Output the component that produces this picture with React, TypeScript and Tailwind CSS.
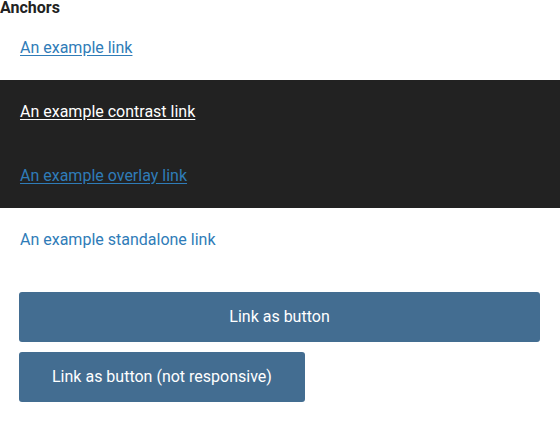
export default function App() {
  return (
    <div className="w-[560px] h-[432px] bg-white font-['Roboto',sans-serif] text-[16px] leading-6">
      <h4 className="text-[16px] font-bold leading-4 text-[#222]">Anchors</h4>
      <div className="px-5 py-5">
        <a href="#" className="text-[#2f7cb8] underline underline-offset-2">An example link</a>
      </div>
      <div className="bg-[#222222]">
        <div className="px-5 py-5">
          <a href="#" className="text-white underline underline-offset-2">An example contrast link</a>
        </div>
        <div className="px-5 py-5">
          <a href="#" className="text-[#2f7cb8] underline underline-offset-2">An example overlay link</a>
        </div>
      </div>
      <div className="px-5 py-5">
        <a href="#" className="text-[#2f7cb8]">An example standalone link</a>
      </div>
      <div className="mt-5 pl-[19px] pr-5 flex flex-col items-start gap-[10px]">
        <a href="#" className="w-full h-[50px] flex items-center justify-center rounded-[3px] bg-[#436d91] text-white">
          Link as button
        </a>
        <a href="#" className="h-[50px] px-[33px] flex items-center justify-center rounded-[3px] bg-[#436d91] text-white">
          Link as button (not responsive)
        </a>
      </div>
    </div>
  );
}
